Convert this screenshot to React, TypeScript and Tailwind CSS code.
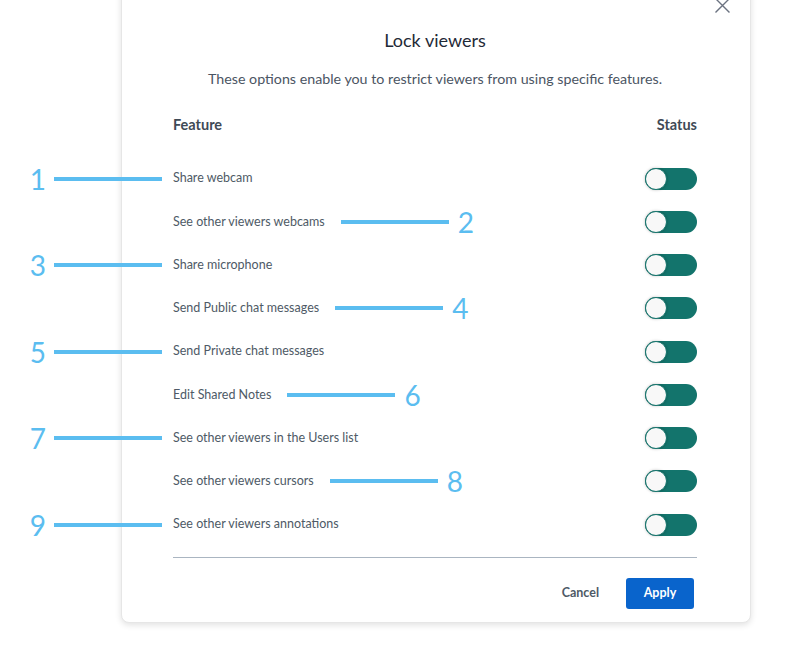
import React from "react";

type Row = { label: string; n: number; side: "left" | "right" };

const rows: Row[] = [
  { label: "Share webcam", n: 1, side: "left" },
  { label: "See other viewers webcams", n: 2, side: "right" },
  { label: "Share microphone", n: 3, side: "left" },
  { label: "Send Public chat messages", n: 4, side: "right" },
  { label: "Send Private chat messages", n: 5, side: "left" },
  { label: "Edit Shared Notes", n: 6, side: "right" },
  { label: "See other viewers in the Users list", n: 7, side: "left" },
  { label: "See other viewers cursors", n: 8, side: "right" },
  { label: "See other viewers annotations", n: 9, side: "left" },
];

function Toggle() {
  return (
    <div className="relative h-[22px] w-[52px] rounded-full bg-[#13746c]">
      <div className="absolute left-0 top-0 h-[22px] w-[22px] rounded-full border border-[#13746c] bg-[#f8f8f8] shadow-[0_0_3px_rgba(0,0,0,0.25)]" />
    </div>
  );
}

function Callout({ n, side }: { n: number; side: "left" | "right" }) {
  if (side === "left") {
    return (
      <div className="absolute right-[calc(100%+11px)] top-1/2 flex -translate-y-1/2 items-center gap-[8px]">
        <span className="font-['Lato',sans-serif] text-[28px] font-normal leading-none text-[#5bbdf0]">{n}</span>
        <span className="block h-[4px] w-[108px] bg-[#5bbdf0]" />
      </div>
    );
  }
  return (
    <div className="absolute left-[calc(100%+16px)] top-1/2 flex -translate-y-1/2 items-center gap-[9px]">
      <span className="block h-[4px] w-[108px] bg-[#5bbdf0]" />
      <span className="font-['Lato',sans-serif] text-[28px] font-normal leading-none text-[#5bbdf0]">{n}</span>
    </div>
  );
}

export default function App() {
  return (
    <div className="h-[664px] w-[795px] overflow-hidden bg-white font-['Lato',sans-serif]">
      <div className="ml-[121px] mt-[-14px] w-[630px] rounded-[8px] border border-[#e6e6e6] bg-white pb-[13px] pl-[51px] pr-[53px] shadow-[0_2px_6px_rgba(0,0,0,0.12)]">
        <div className="relative h-[38px]">
          <svg className="absolute right-[-34px] top-[10px]" width="17" height="17" viewBox="0 0 17 17" fill="none" stroke="#6b7280" strokeWidth="1.4">
            <path d="M1.5 1.5 L15.5 15.5 M15.5 1.5 L1.5 15.5" />
          </svg>
        </div>
        <h1 className="text-center text-[18px] leading-[30px] text-[#1f2a37]">Lock viewers</h1>
        <p className="mt-[14px] text-center text-[14.25px] leading-[20px] text-[#4b5563]">
          These options enable you to restrict viewers from using specific features.
        </p>
        <div className="mt-[26px] flex h-[20px] items-center justify-between text-[14.5px] font-bold text-[#3f4a56]">
          <span>Feature</span>
          <span>Status</span>
        </div>
        <div className="mt-[22px]">
          {rows.map((r) => (
            <div key={r.n} className="flex h-[43.25px] items-center justify-between">
              <span className="relative text-[12.5px] text-[#4e5a66]">
                {r.label}
                <Callout n={r.n} side={r.side} />
              </span>
              <Toggle />
            </div>
          ))}
        </div>
        <div className="mt-[11px] h-px bg-[#aab5c1]" />
        <div className="mt-[20px] flex items-center justify-end gap-[27px] pr-[3px]">
          <button className="text-[12.5px] font-bold text-[#4e5a66]">Cancel</button>
          <button className="h-[31px] w-[68px] rounded-[3px] bg-[#0964cc] text-[12.5px] font-bold text-white">Apply</button>
        </div>
      </div>
    </div>
  );
}
